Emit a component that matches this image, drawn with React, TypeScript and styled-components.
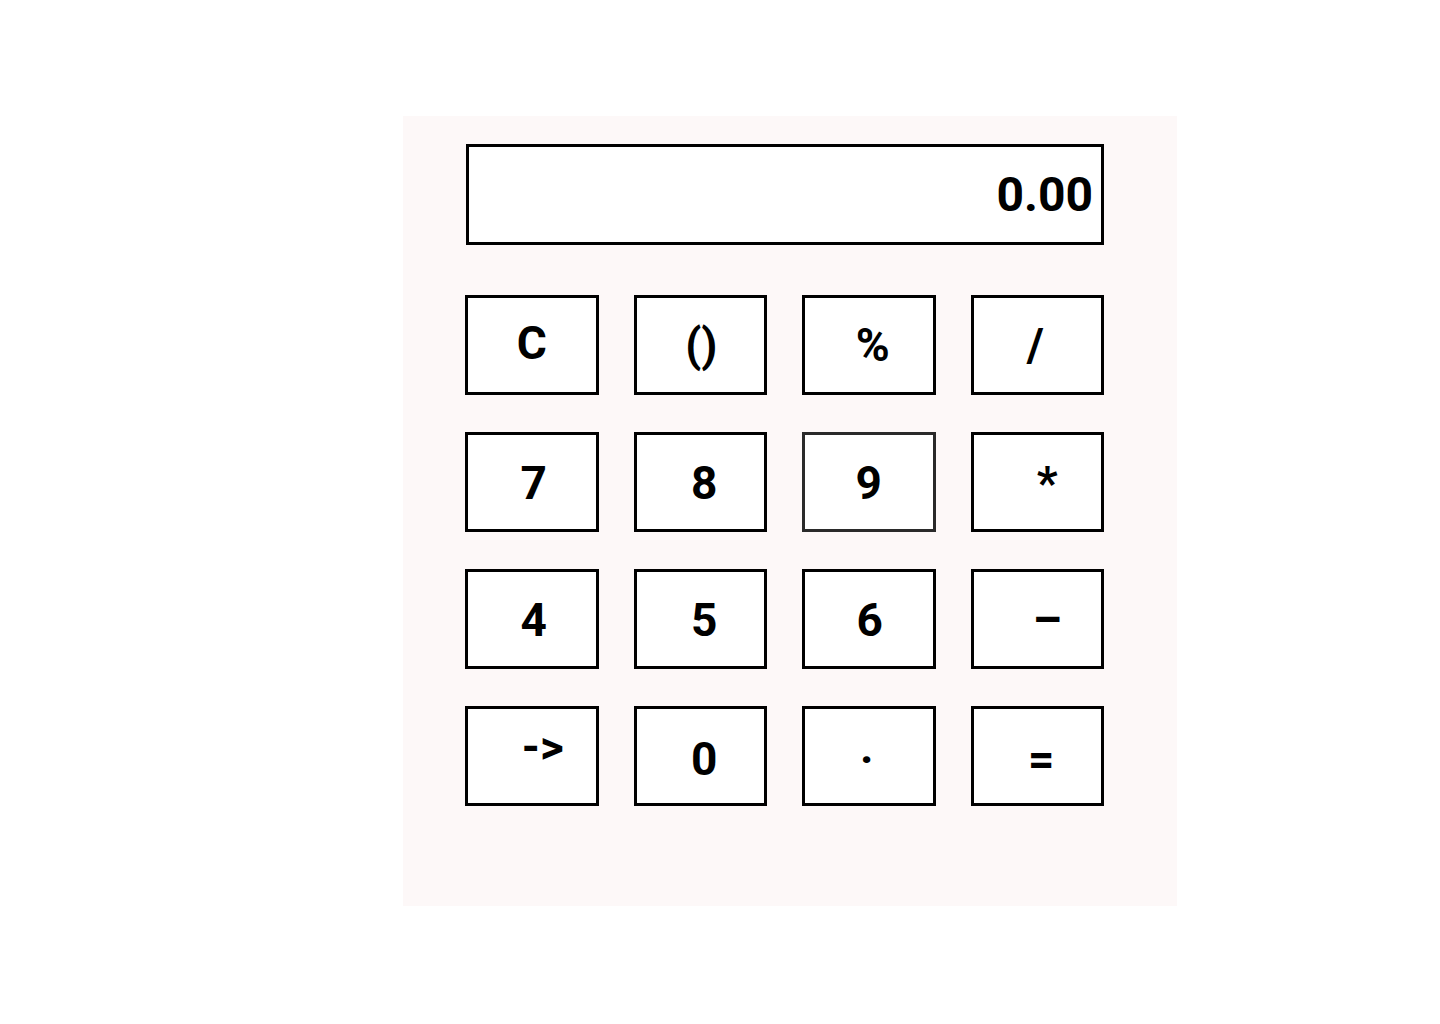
import React from "react";
import styled, { createGlobalStyle } from "styled-components";

const GlobalStyle = createGlobalStyle`
  html, body {
    margin: 0;
    padding: 0;
    background: #ffffff;
  }
  body {
    font-family: Roboto, "Liberation Sans", Arial, sans-serif;
  }
`;

const Page = styled.div`
  display: flex;
  align-items: flex-start;
  padding: 116px 0 0 403px;
  min-height: 1024px;
  box-sizing: border-box;
`;

const Calculator = styled.div`
  width: 774px;
  height: 790px;
  box-sizing: border-box;
  background: #fdf8f8;
  padding: 28px 73px 0 63px;
  display: flex;
  flex-direction: column;
  gap: 50px;
`;

const Display = styled.div`
  height: 101px;
  box-sizing: border-box;
  border: 3px solid #000;
  background: #ffffff;
  display: flex;
  align-items: center;
  justify-content: flex-end;
  padding-right: 8px;
  font-family: Roboto, "Liberation Sans", Arial, sans-serif;
  font-weight: 700;
  font-size: 48px;
  color: #000;
`;

const Keypad = styled.div`
  display: grid;
  grid-template-columns: repeat(4, 1fr);
  column-gap: 35px;
  row-gap: 37px;
  margin-left: -1px;
`;

const Key = styled.button<{ $muted?: boolean }>`
  height: 100px;
  box-sizing: border-box;
  border: 3px solid ${(p) => (p.$muted ? "#2a2a2a" : "#000")};
  background: #ffffff;
  display: flex;
  align-items: center;
  justify-content: center;
  padding: 0;
  font-family: Roboto, "Liberation Sans", Arial, sans-serif;
  font-weight: 700;
  font-size: 46px;
  color: #000;
  cursor: pointer;
`;

const Label = styled.span<{ $dx: number; $dy: number }>`
  display: inline-block;
  line-height: 1;
  transform: translate(${(p) => p.$dx}px, ${(p) => p.$dy}px);
`;

type KeyDef = { label: string; dx: number; dy: number; muted?: boolean };

const keys: KeyDef[] = [
  { label: "C", dx: 0, dy: -2 },
  { label: "()", dx: 1, dy: 0 },
  { label: "%", dx: 4, dy: 0 },
  { label: "/", dx: -2, dy: 0 },
  { label: "7", dx: 2, dy: 1 },
  { label: "8", dx: 4, dy: 1 },
  { label: "9", dx: 0, dy: 1, muted: true },
  { label: "*", dx: 10, dy: 1 },
  { label: "4", dx: 2, dy: 1 },
  { label: "5", dx: 4, dy: 1 },
  { label: "6", dx: 1, dy: 1 },
  { label: "–", dx: 10, dy: 1 },
  { label: "->", dx: 11, dy: -9 },
  { label: "0", dx: 4, dy: 3 },
  { label: "·", dx: -2, dy: 3 },
  { label: "=", dx: 4, dy: 3 },
];

export default function App() {
  return (
    <>
      <GlobalStyle />
      <Page>
        <Calculator>
          <Display>0.00</Display>
          <Keypad>
            {keys.map((k) => (
              <Key key={k.label} $muted={k.muted}>
                <Label $dx={k.dx} $dy={k.dy}>
                  {k.label}
                </Label>
              </Key>
            ))}
          </Keypad>
        </Calculator>
      </Page>
    </>
  );
}
